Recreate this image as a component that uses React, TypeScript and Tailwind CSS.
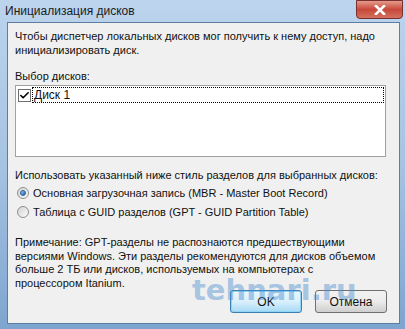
import { Check } from "lucide-react";

const font = { fontFamily: '"Liberation Sans", Arial, sans-serif' };

function Radio({ checked }: { checked?: boolean }) {
  return (
    <span className="w-[12px] h-[12px] rounded-full border border-[#8f8f8f] bg-linear-to-br from-[#d4d4d4] to-[#fbfbfb] flex items-center justify-center shrink-0">
      {checked && (
        <span className="w-[6px] h-[6px] rounded-full bg-linear-to-br from-[#9ccbf3] to-[#1d5fa6] border border-[#2b5f95]" />
      )}
    </span>
  );
}

export default function App() {
  return (
    <div
      className="w-[405px] h-[329px] bg-[#a9c6e4] bg-linear-to-b from-[#bcd4ec] via-[#a6c3e2] to-[#7ea5cf] flex flex-col pl-[7px] pr-[5px] pb-[5px] relative overflow-hidden text-[#111]"
      style={font}
    >
      {/* Title bar */}
      <div className="h-[22px] flex items-start shrink-0">
        <span className="flex-1 text-[12px] leading-[22px] text-[#1b1b1b] -ml-[2px]">Инициализация дисков</span>
        <div className="w-[47px] h-[19px] shrink-0 -mr-[3px] rounded-b-[4px] bg-[#c94a3b] bg-linear-to-b from-[#e39a8a] via-[#c7473a] to-[#d2705e] border border-[#7a3030] flex items-center justify-center">
          <svg width="12" height="10" viewBox="0 0 12 10">
            <path d="M2 1 L10 9 M10 1 L2 9" stroke="#ffffff" strokeWidth="2.6" strokeLinecap="square" />
          </svg>
        </div>
      </div>

      {/* Content */}
      <div className="flex-1 min-h-0 bg-[#f0f0f0] border border-[#5d7ea3] flex flex-col pl-[7px] pr-[12px] text-[11px] leading-[14px]">
        <p className="mt-[6px]">
          Чтобы диспетчер локальных дисков мог получить к нему доступ, надо инициализировать диск.
        </p>

        <p className="mt-[12px]">Выбор дисков:</p>
        <div className="mt-[2px] h-[73px] bg-white border border-[#a0a0a0] p-[1px] mr-[1px]">
          <div className="flex items-center h-[16px]">
            <span className="w-[13px] h-[13px] border border-[#6f6f6f] bg-white flex items-center justify-center shrink-0 ml-[1px]">
              <Check className="w-[11px] h-[11px] text-black" strokeWidth={3.5} />
            </span>
            <span className="flex-1 h-[16px] ml-[1px] border border-dotted border-black flex items-center pl-[1px] leading-none text-[12px]">
              Диск 1
            </span>
          </div>
        </div>

        <p className="mt-[11px]">Использовать указанный ниже стиль разделов для выбранных дисков:</p>
        <div className="mt-[4px] flex flex-col gap-[5px] pl-[2px]">
          <label className="flex items-center gap-[4px]">
            <Radio checked />
            <span>Основная загрузочная запись (MBR - Master Boot Record)</span>
          </label>
          <label className="flex items-center gap-[4px]">
            <Radio />
            <span>Таблица с GUID разделов (GPT - GUID Partition Table)</span>
          </label>
        </div>

        <p className="mt-[17px] mr-[7px] leading-[13.5px]">
          Примечание: GPT-разделы не распознаются предшествующими версиями Windows. Эти разделы рекомендуются для дисков объемом больше 2 ТБ или дисков, используемых на компьютерах с процессором Itanium.
        </p>

        <div className="mt-auto mb-[10px] flex justify-end gap-[13px]">
          <button className="w-[72px] h-[23px] rounded-[3px] border border-[#3c7fb1] bg-linear-to-b from-[#eaf6fd] via-[#d9f0fc] to-[#a7d9f5] shadow-[inset_0_0_0_1px_#8ed4f5] text-[12px]">
            OK
          </button>
          <button className="w-[72px] h-[23px] rounded-[3px] border border-[#707070] bg-linear-to-b from-[#f2f2f2] via-[#ebebeb] to-[#cfcfcf] text-[12px]">
            Отмена
          </button>
        </div>
      </div>

      {/* Watermark */}
      <div
        className="absolute left-[192px] top-[276px] text-[29px] font-bold text-[#4f8fd0] opacity-45 pointer-events-none leading-none"
        style={{ fontFamily: '"DejaVu Sans", sans-serif' }}
      >
        tehnari.ru
      </div>
    </div>
  );
}
